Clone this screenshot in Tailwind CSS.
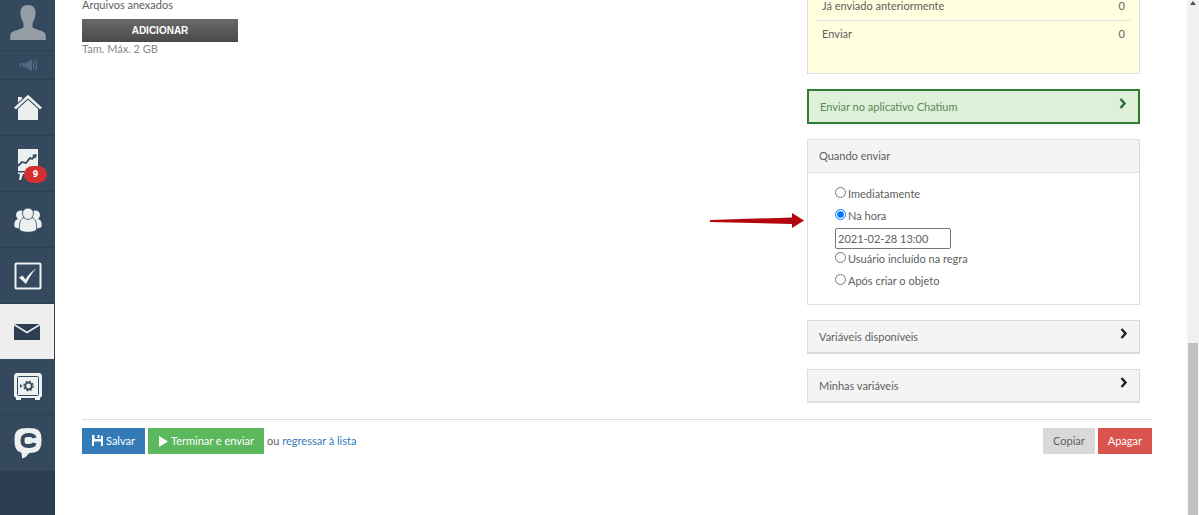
<!DOCTYPE html>
<html lang="pt">
<head>
    <meta charset="UTF-8">
    <meta name="viewport" content="width=device-width, initial-scale=1.0">
    <title>Enviar mensagem</title>
    <script src="https://cdn.jsdelivr.net/npm/@tailwindcss/browser@4"></script>
</head>
<body class="bg-white font-[Lato,'Open_Sans',sans-serif] text-[11px] leading-4 text-[#606060]">

    <div class="flex h-screen overflow-hidden">
        <!-- Sidebar -->
        <nav class="flex w-[55px] shrink-0 flex-col bg-[#2c3e50] text-[#ecf0f1]">
            <a href="#" aria-label="Perfil" class="flex h-[51px] shrink-0 justify-center border-b border-[#2c4158] bg-[#34495e]">
                <svg class="h-[41px] w-9" viewBox="0 0 36 41" fill="#949ca5"><path d="M18 5c5 0 8 3 7.500 8.500C25.300 19 23.500 21 22.500 23v4c2 3 12 3 13 7l.5 6H0l.5-6c1-4 11-4 13-7v-4c-1-2-2.800-4-3-9.500C10 8 13 5 18 5z"/></svg>
            </a>
            <a href="#" aria-label="Novidades" class="flex h-[29px] shrink-0 items-center justify-center border-b border-[#2c4158] bg-[#34495e]">
                <svg class="h-3 w-[18px]" viewBox="0 0 18 12" fill="#4f6a84"><path d="M0 5l2-1.500V8L0 6.500zM3 4h4l6-4v12L7 8.500V8H3zM14 1.500c2 2.500 2 6.500 0 9zM15.500 1c2 2.500 2 7.500 0 10l1.500.5c2-3 2-8 0-11z"/></svg>
            </a>
            <a href="#" aria-label="Início" class="flex h-14 shrink-0 items-center justify-center border-b border-[#2c4158] bg-[#34495e]">
                <svg class="h-7 w-7" viewBox="0 0 28 28" fill="currentColor"><path d="M4 3h4v4l-4 4z"/><path d="M14 5l10 9v12H4V14z"/><path d="M1 14.500L14 2.500l13 12" fill="none" stroke="#34495e" stroke-width="4.600"/><path d="M1 14.500L14 2.500l13 12" fill="none" stroke="currentColor" stroke-width="2.600"/></svg>
            </a>
            <a href="#" aria-label="Estatísticas" class="relative flex h-14 shrink-0 items-center justify-center border-b border-[#2c4158] bg-[#34495e]">
                <svg class="h-8 w-[22px]" viewBox="0 0 22 32" fill="currentColor"><path d="M1 1h20v22H1zM1 24.500h20V26H1zM3 26h3l-2 6H2z"/><path d="M1 18l4-4 4 1 4-5 2 1 4-4" fill="none" stroke="#34495e" stroke-width="1.800"/><path d="M15 7l4.500-1-.5 4.500z" fill="#34495e"/></svg>
                <span class="absolute top-[30px] left-6 flex h-[17px] w-[23px] items-center justify-center rounded-full bg-[#d32f2f] font-['DejaVu_Sans',sans-serif] text-[8px] font-bold text-white">9</span>
            </a>
            <a href="#" aria-label="Usuários" class="flex h-14 shrink-0 items-center justify-center border-b border-[#2c4158] bg-[#34495e]">
                <svg class="h-[26px] w-7" viewBox="0 0 28 26" fill="currentColor"><circle cx="6.500" cy="8" r="4.500"/><circle cx="21.500" cy="8" r="4.500"/><path d="M.5 20c-.5-6 1-8 5-8h17c4 0 5.500 2 5 8-2 1.500-5 1.500-7 1.500H8c-3 0-5.500 0-7.500-1.500z"/><path d="M14 1a5.500 5.500 0 0 1 3.800 9.500C21 11.500 23 14 22.500 23c-4 3-13 3-17 0C5 14 7 11.500 10.200 10.500A5.500 5.500 0 0 1 14 1z" stroke="#34495e" stroke-width=".8"/><path d="M9.500 10.500c3 2.500 6 2.500 9 0" fill="none" stroke="#34495e" stroke-width=".8"/></svg>
            </a>
            <a href="#" aria-label="Tarefas" class="flex h-14 shrink-0 items-center justify-center border-b border-[#2c4158] bg-[#34495e]">
                <svg class="h-7 w-7" viewBox="0 0 28 28"><rect x="1.500" y="1.500" width="25" height="25" rx="1" fill="none" stroke="currentColor" stroke-width="2"/><path d="M5 15.500l3.500-2 3 4C14 13 18 9 22.500 6 18 11 15 16 12 22z" fill="currentColor"/></svg>
            </a>
            <a href="#" aria-label="Mensagens" aria-current="page" class="flex h-[55px] shrink-0 items-center justify-center border-r border-[#2c3e50] bg-[#eee]">
                <svg class="h-4 w-[26px]" viewBox="0 0 26 16" fill="#2c3e50"><path d="M0 0h26v16H0z"/><path d="M0 .5l13 8 13-8" fill="none" stroke="#eee" stroke-width="1.600"/></svg>
            </a>
            <a href="#" aria-label="Pagamentos" class="flex h-14 shrink-0 items-center justify-center border-b border-[#2c4158] bg-[#34495e]">
                <svg class="h-[27px] w-7" viewBox="0 0 28 27" fill="currentColor"><path d="M2 0h24l2 2v21l-2 2v2h-5v-2H7v2H2v-2l-2-2V2z"/><rect x="3.500" y="3.500" width="21" height="19" rx="1" fill="none" stroke="#34495e"/><path d="M6 11l2.500 2L6 15z" fill="#34495e"/><circle cx="14.500" cy="13" r="3.300" fill="none" stroke="#34495e" stroke-width="1.800"/><circle cx="14.500" cy="13" r="4.700" fill="none" stroke="#34495e" stroke-width="1.200" stroke-dasharray="2 1.690"/></svg>
            </a>
            <a href="#" aria-label="Chatium" class="flex h-14 shrink-0 items-center justify-center bg-[#34495e]">
                <svg class="h-8 w-7" viewBox="0 0 28 32" fill="currentColor"><path d="M14 1c11 0 13.500 3 13.500 12S25 26 15 26c-2 3-4 5-7 5.500 0-2.500 0-4-1-6C2 24 .5 20 .5 13 .5 4 3 1 14 1z"/><path d="M20.500 11C20 8.500 18 8 14.500 8 10 8 8.500 9 8.500 13.500S10 19 14.500 19c3.500 0 5.500-.5 6-3" fill="none" stroke="#34495e" stroke-width="4"/></svg>
            </a>
        </nav>

        <!-- Content -->
        <main class="-mt-[3px] min-w-0 flex-1 pr-[35px] pl-[27px]">
            <div class="flex justify-between border-b border-[#ddd] pr-3 pb-4">
                <section>
                    <p>Arquivos anexados</p>
                    <button type="button" class="mt-1.5 block h-[23px] w-[156px] bg-linear-to-b from-[#6a6a6a] to-[#4a4a4a] font-['Liberation_Sans',sans-serif] text-[10px] font-bold text-white">ADICIONAR</button>
                    <p class="leading-[14px] text-[#888]">Tam. Máx. 2 GB</p>
                </section>

                <div class="relative flex w-[333px] flex-col gap-[15px]">
                    <dl class="border border-t-0 border-[#ddd] bg-[#ffffdf] px-2 pb-[31px]">
                        <div class="flex justify-between border-b border-[#ddd] px-1.5 pt-px pb-1.5">
                            <dt>Já enviado anteriormente</dt>
                            <dd>0</dd>
                        </div>
                        <div class="flex justify-between px-1.5 pt-[5px]">
                            <dt>Enviar</dt>
                            <dd>0</dd>
                        </div>
                    </dl>

                    <button type="button" class="flex h-[35px] items-center justify-between border-2 border-[#2e7d32] bg-[#dff0d8] px-[11px] text-left text-[#5a8a5c]">
                        Enviar no aplicativo Chatium
                        <svg class="mb-1.5 h-[11px] w-2" viewBox="0 0 8 11" fill="none" stroke="#2f6b35" stroke-width="2.500"><path d="M1.500 1l4 4.500-4 4.500"/></svg>
                    </button>

                    <fieldset class="border border-[#ddd]">
                        <legend class="float-left h-[33px] w-full border-b border-[#ddd] bg-[#f4f4f4] px-[11px] py-2">Quando enviar</legend>
                        <div class="clear-both px-[27px] pt-[11px] pb-[11px]">
                            <label class="mb-0.5 flex h-5 items-center gap-0.5"><input type="radio" name="quando" class="mb-1 size-[11px]">Imediatamente</label>
                            <label class="mb-0.5 flex h-5 items-center gap-0.5"><input type="radio" name="quando" class="mb-1 size-[11px]" checked>Na hora</label>
                            <input type="text" aria-label="Data e hora" value="2021-02-28 13:00" class="block h-[21px] w-[116px] rounded-xs border border-[#777] px-0.5">
                            <label class="mb-0.5 flex h-5 items-center gap-0.5"><input type="radio" name="quando" class="mb-1 size-[11px]">Usuário incluído na regra</label>
                            <label class="mb-0.5 flex h-5 items-center gap-0.5"><input type="radio" name="quando" class="mb-1 size-[11px]">Após criar o objeto</label>
                        </div>
                    </fieldset>

                    <button type="button" class="flex h-[34px] items-center justify-between border border-b-2 border-[#ddd] bg-[#f4f4f4] px-[11px] text-left">
                        Variáveis disponíveis
                        <svg class="mb-1.5 h-[11px] w-2" viewBox="0 0 8 11" fill="none" stroke="#222" stroke-width="2.500"><path d="M1.500 1l4 4.500-4 4.500"/></svg>
                    </button>
                    <button type="button" class="flex h-[34px] items-center justify-between border border-b-2 border-[#ddd] bg-[#f4f4f4] px-[11px] text-left">
                        Minhas variáveis
                        <svg class="mb-1.5 h-[11px] w-2" viewBox="0 0 8 11" fill="none" stroke="#222" stroke-width="2.500"><path d="M1.500 1l4 4.500-4 4.500"/></svg>
                    </button>

                    <!-- Pointer to the selected option -->
                    <svg class="absolute top-[216px] right-[336px] h-4 w-[95px]" viewBox="0 0 95 16" fill="#b3060e"><path d="M1 7l82-2.500V0l12 7.500L83 15v-4L1 9z"/></svg>
                </div>
            </div>

            <!-- Actions -->
            <div class="flex items-center gap-[3px] pt-2">
                <button type="button" class="flex h-[26px] items-center gap-[3px] bg-[#337ab7] px-2.5 text-white">
                    <svg class="mb-0.5 size-[11px]" viewBox="0 0 11 11" fill="currentColor"><path d="M0 0h2.500v4H9V0l2 1.500V11H9V6.500H2V11H0zM5.500 0h2v3h-2z"/></svg>
                    Salvar
                </button>
                <button type="button" class="flex h-[26px] items-center gap-[3px] bg-[#5cb85c] px-2.5 text-white">
                    <svg class="h-[11px] w-2.5" viewBox="0 0 10 11" fill="currentColor"><path d="M1 0l9 5.500L1 11z"/></svg>
                    Terminar e enviar
                </button>
                <p>ou <a href="#" class="text-[#337ab7]">regressar à lista</a></p>
                <button type="button" class="ml-auto h-[26px] bg-[#d9d9d9] px-2.5">Copiar</button>
                <button type="button" class="h-[26px] bg-[#d9534f] px-2.5 text-white">Apagar</button>
            </div>
        </main>

        <!-- Scrollbar -->
        <div class="flex w-3 shrink-0 flex-col items-center bg-[#f1f1f1]" aria-hidden="true">
            <svg class="mt-px h-1 w-1.5" viewBox="0 0 6 4" fill="#505050"><path d="M0 4l3-4 3 4z"/></svg>
            <div class="mt-auto h-1/3 w-2.5 bg-[#c1c1c1]"></div>
        </div>
    </div>

</body>
</html>
